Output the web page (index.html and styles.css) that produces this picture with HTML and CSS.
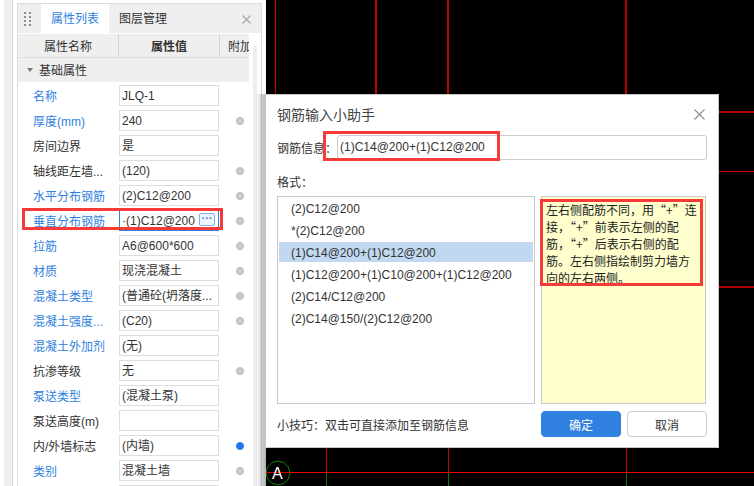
FILE: index.html
```html
<!DOCTYPE html>
<html lang="zh">
<head>
<meta charset="utf-8">
<title>钢筋输入小助手</title>
<link rel="stylesheet" href="styles.css">
</head>
<body>
<div class="app">
  <aside class="side">
    <div class="panel">
      <div class="tabs">
        <svg class="grip" width="7" height="14" viewBox="0 0 7 14"><g fill="#8e8e8e"><rect x="0" width="2" height="2"/><rect x="5" width="2" height="2"/><rect x="0" y="4" width="2" height="2"/><rect x="5" y="4" width="2" height="2"/><rect x="0" y="8" width="2" height="2"/><rect x="5" y="8" width="2" height="2"/><rect x="0" y="12" width="2" height="2"/><rect x="5" y="12" width="2" height="2"/></g></svg>
        <div class="tab active">属性列表</div>
        <div class="tab">图层管理</div>
        <svg class="panel-close" width="9" height="9" viewBox="0 0 9 9"><path d="M0.5 0.5L8.5 8.5M8.5 0.5L0.5 8.5" stroke="#a8a8a8" stroke-width="1.1" fill="none"/></svg>
      </div>
      <div class="head">
        <div class="hc c1">属性名称</div>
        <div class="hc c2">属性值</div>
        <div class="hc c3">附加</div>
      </div>
      <div class="group"><span class="tri"></span>基础属性</div>
      <div class="rows">
        <div class="row"><span class="name blue">名称</span><span class="val">JLQ-1</span><span class="dotcell"></span></div>
        <div class="row"><span class="name blue">厚度(mm)</span><span class="val">240</span><span class="dotcell"><i class="dot"></i></span></div>
        <div class="row"><span class="name">房间边界</span><span class="val">是</span><span class="dotcell"></span></div>
        <div class="row"><span class="name">轴线距左墙...</span><span class="val">(120)</span><span class="dotcell"><i class="dot"></i></span></div>
        <div class="row"><span class="name blue">水平分布钢筋</span><span class="val">(2)C12@200</span><span class="dotcell"><i class="dot"></i></span></div>
        <div class="row"><span class="name blue">垂直分布钢筋</span><span class="val focus">·(1)C12@200<b class="more">···</b></span><span class="dotcell"><i class="dot"></i></span></div>
        <div class="row"><span class="name blue">拉筋</span><span class="val">A6@600*600</span><span class="dotcell"><i class="dot"></i></span></div>
        <div class="row"><span class="name blue">材质</span><span class="val">现浇混凝土</span><span class="dotcell"><i class="dot"></i></span></div>
        <div class="row"><span class="name blue">混凝土类型</span><span class="val">(普通砼(坍落度...</span><span class="dotcell"><i class="dot"></i></span></div>
        <div class="row"><span class="name blue">混凝土强度...</span><span class="val">(C20)</span><span class="dotcell"><i class="dot"></i></span></div>
        <div class="row"><span class="name blue">混凝土外加剂</span><span class="val">(无)</span><span class="dotcell"></span></div>
        <div class="row"><span class="name">抗渗等级</span><span class="val">无</span><span class="dotcell"><i class="dot"></i></span></div>
        <div class="row"><span class="name blue">泵送类型</span><span class="val">(混凝土泵)</span><span class="dotcell"></span></div>
        <div class="row"><span class="name">泵送高度(m)</span><span class="val"></span><span class="dotcell"></span></div>
        <div class="row"><span class="name">内/外墙标志</span><span class="val">(内墙)</span><span class="dotcell"><i class="dot on"></i></span></div>
        <div class="row"><span class="name blue">类别</span><span class="val">混凝土墙</span><span class="dotcell"><i class="dot"></i></span></div>
        <div class="row"><span class="name"></span><span class="val"></span><span class="dotcell"></span></div>
      </div>
      <div class="scroll"></div>
    </div>
  </aside>
  <main class="canvas">
    <svg class="cad" width="488" height="486" viewBox="0 0 488 486">
      <g fill="none" shape-rendering="crispEdges">
        <path d="M9.5 0V94" stroke="#e00000"/>
        <path d="M110 0V94M182 0V94M360 0V94" stroke="#c00000" stroke-width="2"/>
        <path d="M452 112H488M452 287H488" stroke="#b00000" stroke-width="2"/>
        <path d="M452 171.5H488" stroke="#e00000"/>
        <path d="M60 448V472M182 448V472M360 448V472" stroke="#c80000"/>
        <path d="M60 473V486M182 473V486M360 473V486" stroke="#008000"/>
      </g>
      <polygon class="axis-ring" points="12,461 18,462.6 22.4,467 24,473 22.4,479 18,483.4 12,485 6,483.4 1.6,479 0,473 1.6,467 6,462.6"/>
      <path d="M0 472.5H488" stroke="#e00000" shape-rendering="crispEdges"/>
      <text x="6" y="479" class="axis">A</text>
    </svg>
  </main>
</div>
<section class="dialog">
  <header class="dlg-title"><span>钢筋输入小助手</span>
    <svg width="11" height="11" viewBox="0 0 11 11"><path d="M0.5 0.5L10.5 10.5M10.5 0.5L0.5 10.5" stroke="#8c8c8c" stroke-width="1.1" fill="none"/></svg>
  </header>
  <div class="info"><label>钢筋信息：</label><div class="input">(1)C14@200+(1)C12@200</div></div>
  <div class="fmt">格式：</div>
  <div class="lists">
    <ul class="list">
      <li>(2)C12@200</li>
      <li>*(2)C12@200</li>
      <li class="sel">(1)C14@200+(1)C12@200</li>
      <li>(1)C12@200+(1)C10@200+(1)C12@200</li>
      <li>(2)C14/C12@200</li>
      <li>(2)C14@150/(2)C12@200</li>
    </ul>
    <div class="note"><p class="note-text">左右侧配筋不同，用“+”连<br>接，“+”前表示左侧的配<br>筋，“+”后表示右侧的配<br>筋。左右侧指绘制剪力墙方<br>向的左右两侧。</p></div>
  </div>
  <footer class="foot">
    <span class="tip">小技巧：双击可直接添加至钢筋信息</span>
    <div class="btns"><button class="btn primary">确定</button><button class="btn">取消</button></div>
  </footer>
</section>
<div class="hl hl-row"></div>
<div class="hl hl-input"></div>
<div class="hl hl-note"></div>
</body>
</html>
```
FILE: styles.css
```css
* { box-sizing: border-box; }
html, body { margin: 0; padding: 0; }
body { width: 754px; height: 486px; overflow: hidden; position: relative; font-family: "Liberation Sans", "Noto Sans CJK SC", sans-serif; font-size: 12px; color: #333; background: #000; }
.app { display: flex; height: 486px; }
.side { width: 266px; flex: none; padding: 3px 4px 0 17px; position: relative; background: linear-gradient(to right, #fff 0 4px, #eee 4px 12px, #d8d8d8 12px 13px, #fff 13px); }
.side::after { content: ""; position: absolute; right: 0; top: 94px; bottom: 0; width: 10px; background: linear-gradient(to right, rgba(0,0,0,0), rgba(0,0,0,.3)); }
.panel { position: relative; width: 245px; height: 483px; background: #fff; border: 1px solid #dcdcdc; border-bottom: 0; overflow: hidden; }
.tabs { height: 29px; background: #efefef; display: flex; align-items: center; padding-left: 6px; position: relative; }
.grip { margin-right: 10px; }
.tab { width: 68px; height: 29px; line-height: 30px; text-align: center; }
.tab.active { background: #fff; color: #2f7fe0; }
.panel-close { position: absolute; right: 10px; top: 11px; }
.head { display: flex; height: 24px; width: 231px; background: #efefef; border-bottom: 1px solid #dedede; margin-top: 1px; }
.hc { line-height: 26px; text-align: center; border-right: 1px solid #d4d4d4; overflow: hidden; white-space: nowrap; }
.c1 { width: 101px; }
.c2 { width: 101px; font-weight: bold; }
.c3 { width: 29px; border-right: 0; text-align: left; padding-left: 8px; }
.group { height: 24px; width: 231px; background: #efefef; line-height: 26px; padding-left: 21px; position: relative; }
.tri { position: absolute; left: 9px; top: 10px; border: 3px solid transparent; border-top: 4px solid #777; }
.rows { padding-top: 1px; }
.row { display: flex; align-items: center; height: 25px; width: 231px; }
.name { width: 101px; padding-left: 15px; white-space: nowrap; overflow: hidden; }
.blue { color: #2f7fe0; }
.val { width: 100px; height: 21px; border: 1px solid #dedede; line-height: 21px; padding-left: 2px; position: relative; white-space: nowrap; overflow: hidden; }
.focus { border-color: #fff #2f7fe0 #2f7fe0; }
.more { position: absolute; right: 3px; top: 2px; width: 16px; height: 13px; border: 1px solid #7fb0ea; border-radius: 2px; background: #eef5fd; color: #2f7fe0; font-size: 11px; line-height: 9px; text-align: center; }
.dotcell { flex: 1; display: flex; justify-content: center; padding-left: 12px; }
.dot { display: block; width: 8px; height: 8px; border-radius: 50%; background: #ccc; border: 1px solid #b8b8b8; }
.dot.on { background: #1e78e6; border-color: #1e78e6; }
.scroll { position: absolute; right: 4px; top: 42px; width: 4px; bottom: 0; background: #eee; }
.canvas { flex: 1; position: relative; }
.cad { display: block; }
.axis { font: 16px "Liberation Sans", sans-serif; fill: #fff; }
.axis-ring { fill: #000; stroke: #0a8a0a; }
.dialog { position: absolute; left: 265px; top: 94px; width: 454px; height: 354px; background: #fff; border: 1px solid #c8c8c8; padding: 0 11px; }
.dlg-title { height: 38px; display: flex; align-items: center; justify-content: space-between; font-size: 14px; color: #444; padding-right: 2px; margin-bottom: 1px; }
.info { display: flex; align-items: center; height: 26px; }
.info label { width: 60px; flex: none; white-space: nowrap; }
.input { flex: 1; height: 25px; border: 1px solid #ccc; border-radius: 3px; line-height: 23px; padding-left: 2px; }
.fmt { margin-top: 13px; height: 20px; line-height: 20px; }
.lists { display: flex; gap: 6px; height: 208px; margin-top: 3px; }
.list { list-style: none; margin: 0; padding: 1px 1px 0; width: 258px; border: 1px solid #c8c8c8; }
.list li { height: 22px; line-height: 22px; padding-left: 12px; white-space: nowrap; }
.list li.sel { background: linear-gradient(#c1d9f0, #c1d9f0) no-repeat 0 0 / 100% 20px; }
.note { width: 165px; background: #ffffcd; border: 1px solid #c8c8c8; padding: 4px 0 0 4px; }
.note-text { margin: 0; line-height: 17px; color: #222; font-family: "Noto Sans CJK SC", sans-serif; white-space: nowrap; }
.foot { display: flex; justify-content: space-between; align-items: center; margin-top: 7px; height: 26px; }
.btns { display: flex; gap: 6px; }
.btn { width: 80px; height: 26px; border: 1px solid #ccc; border-radius: 4px; background: #fff; font: 12px "Liberation Sans", "Noto Sans CJK SC", sans-serif; color: #333; }
.btn.primary { background: #2f80e0; border-color: #2f80e0; color: #fff; }
.hl { position: absolute; border: 3px solid #f53a3a; }
.hl-row { left: 22px; top: 208px; width: 201px; height: 22px; }
.hl-input { left: 323px; top: 131px; width: 177px; height: 30px; }
.hl-note { left: 540px; top: 199px; width: 163px; height: 87px; }
```
